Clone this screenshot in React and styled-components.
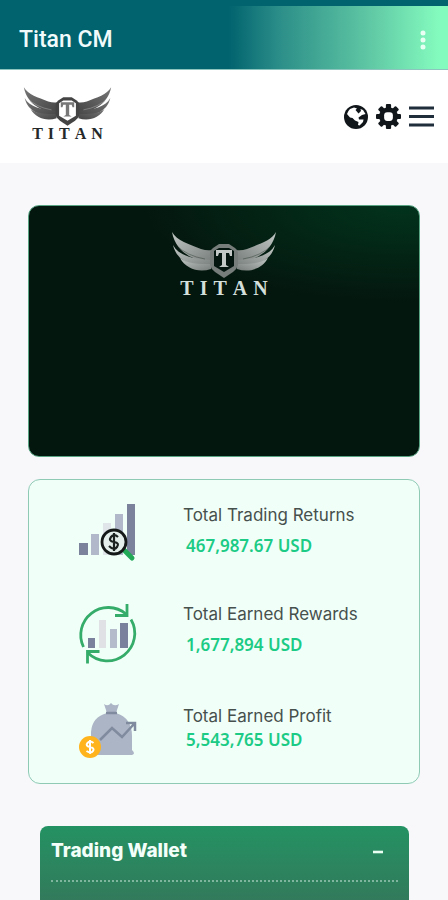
import React, { useState } from 'react';
import styled, { createGlobalStyle } from 'styled-components';

const GlobalStyle = createGlobalStyle`
  *, *::before, *::after { box-sizing: border-box; }
  html, body, #root { height: 100%; }
  body { margin: 0; background: #f8f8fb; font-family: Inter, "Liberation Sans", sans-serif; }
  h1, h2, dl, dt, dd { margin: 0; }
`;

const Page = styled.div`
  min-height: 100%;
  display: flex;
  flex-direction: column;
`;

const AppBar = styled.header`
  height: 70px;
  display: flex;
  align-items: center;
  justify-content: space-between;
  padding: 4px 16px 0 19px;
  border-top: 6px solid #00636e;
  border-bottom: 1px solid #8cc5bd;
  background: linear-gradient(90deg, #00636e 51%, #2b8d88 62%, #5cc3a2 81%, #84fbbe 98%);
`;

const AppTitle = styled.h1`
  color: #f2fbfb;
  font: 500 23px/28px Roboto, sans-serif;
`;

const IconButton = styled.button`
  display: flex;
  padding: 0;
  border: 0;
  background: none;
  color: ${(p) => p.$color || '#11161b'};
  cursor: pointer;
`;

const NavBar = styled.nav`
  height: 93px;
  display: flex;
  align-items: center;
  justify-content: space-between;
  padding: 0 14px 0 23px;
  background: #fff;
`;

const NavActions = styled.div`
  display: flex;
  align-items: center;
  gap: 8px;
`;

const Brand = styled.div`
  display: flex;
  flex-direction: column;
  align-items: center;
  padding-bottom: ${(p) => (p.$large ? 0 : 4)}px;
  color: ${(p) => (p.$large ? '#d3dfda' : '#25292a')};
`;

const Wordmark = styled.span`
  font: 700 ${(p) => (p.$large ? 20 : 16)}px/${(p) => (p.$large ? 20 : 16)}px "Liberation Serif", serif;
  display: flex;
  gap: ${(p) => (p.$large ? 6 : 5)}px;
`;

const Main = styled.main`
  flex: 1;
  display: flex;
  flex-direction: column;
  padding: 42px 28px 0;
`;

const Banner = styled.section`
  height: 252px;
  display: flex;
  justify-content: center;
  padding-top: 26px;
  border: 1px solid #58a483;
  border-radius: 11px;
  background: radial-gradient(ellipse 66% 38% at 96% 0, #02331c, #04170f);
`;

const Stats = styled.dl`
  margin-top: 22px;
  padding: 17px 46px 22px;
  display: flex;
  flex-direction: column;
  gap: 33px;
  border: 1px solid #8fcab5;
  border-radius: 12px;
  background: #f1fff9;
`;

const Stat = styled.div`
  display: grid;
  grid-template-columns: 64px 1fr;
  column-gap: 44px;
  align-items: center;
`;

const StatText = styled.div`
  display: flex;
  flex-direction: column;
  gap: ${(p) => (p.$tight ? 0 : 7)}px;
  white-space: nowrap;
`;

const StatLabel = styled.dt`
  color: #46504d;
  font-size: 17px;
  line-height: 24px;
`;

const StatValue = styled.dd`
  padding-left: 3px;
  color: #1ccb85;
  font: 600 17px/24px "Noto Sans", sans-serif;
`;

const Wallet = styled.section`
  flex: 1;
  min-height: 74px;
  margin: 42px 11px 0 12px;
  padding: 0 11px;
  border-radius: 8px 8px 0 0;
  background: linear-gradient(#249263, #327a5b 74px);
`;

const WalletHeader = styled.div`
  height: 56px;
  display: flex;
  align-items: center;
  justify-content: space-between;
  padding: 0 14px 4px 0;
  border-bottom: 2px dotted #7fb49e;
`;

const WalletTitle = styled.h2`
  color: #f3fff9;
  font-size: 19px;
  font-weight: 800;
  line-height: 24px;
`;

function WingMark({ id, width, height, shield, from, to }) {
  const fill = `url(#${id})`;
  const wing = (
    <g fill={fill}>
      <path d="M1 0C6 9 18 12 30 17Q36 19 41 18V31C25 29 5 22 1 0Z" />
      <path d="M2 13C8 24 22 27 41 28V35C22 35 6 30 2 13Z" />
      <path d="M9 26C17 32 27 32 40 32V37C28 41 15 37 9 26Z" />
      <path d="M5 13Q16 24 34 27" fill="none" stroke={shield} strokeWidth=".7" opacity=".45" />
    </g>
  );
  return (
    <svg width={width} height={height} viewBox="0 0 106 46" aria-hidden="true">
      <defs>
        <linearGradient id={id} x1="0" y1="0" x2="1" y2="1">
          <stop offset="0" stopColor={from} />
          <stop offset="1" stopColor={to} />
        </linearGradient>
      </defs>
      {wing}
      <g transform="translate(106 0) scale(-1 1)">{wing}</g>
      <path d="M48 12H58L64 16Q67 18 67 21V33Q66 37 62 40L53 46L44 40Q40 37 39 33V21Q39 18 42 16Z" fill={to} />
      <path d="M48 16H58L63 19V34L53 40L43 34V19Z" fill={shield} />
      <path d="M45 18H61V24H59L58 21H55V33L58 35H48L51 33V21H48L47 24H45Z" fill={from} />
    </svg>
  );
}

function Logo({ large }) {
  return (
    <Brand $large={large} role="img" aria-label="TITAN">
      {large ? (
        <WingMark id="wings-light" width={106} height={46} shield="#03150e" from="#c2c8c5" to="#777d7a" />
      ) : (
        <WingMark id="wings-dark" width={89} height={39} shield="#ffffff" from="#777777" to="#444444" />
      )}
      <Wordmark $large={large}>
        {[...'TITAN'].map((letter, i) => <span key={i}>{letter}</span>)}
      </Wordmark>
    </Brand>
  );
}

const DotsIcon = () => (
  <svg width="18" height="20" viewBox="0 0 18 20" fill="currentColor" aria-hidden="true">
    <circle cx="9" cy="3" r="2.5" /><circle cx="9" cy="10" r="2.5" /><circle cx="9" cy="17" r="2.5" />
  </svg>
);

const GlobeIcon = () => (
  <svg width="24" height="24" viewBox="0 0 24 24" aria-hidden="true">
    <circle cx="12" cy="12" r="12" fill="currentColor" />
    <path d="M6 4L10 2.5L13 3.5L11.5 5L14.5 8.5L17 6L16.5 4L19 5L21.5 9L18 10L14.5 12.5L15 14.5L19.5 14.5L19 17L15.5 20.5L14 20L14.5 17L11 15.5L8.5 13L6 12.5L3 9Q4 6 6 4Z" fill="#fff" />
  </svg>
);

const GearIcon = () => (
  <svg width="25" height="25" viewBox="-12 -12 24 24" aria-hidden="true">
    <g fill="currentColor">
      {[0, 45, 90, 135].map((angle) => (
        <rect key={angle} x="-2.5" y="-12" width="5" height="24" rx="1" transform={`rotate(${angle})`} />
      ))}
      <circle r="9" />
    </g>
    <rect x="-4.2" y="-4.2" width="8.4" height="8.4" rx="3" fill="#fff" />
  </svg>
);

const MenuIcon = () => (
  <svg width="25" height="24" viewBox="0 0 25 24" aria-hidden="true">
    <path d="M0 3H25M0 11.5H25M0 20H25" stroke="#202d3b" strokeWidth="3.2" />
  </svg>
);

const StatGraphic = styled.svg.attrs({ width: 64, height: 66, 'aria-hidden': true })`
  display: block;
  overflow: visible;
`;

const ReturnsIcon = () => (
  <StatGraphic viewBox="0 0 64 66">
    <path d="M4 46h9v12H4zM52 7h8v51h-8z" fill="#7b839c" />
    <path d="M16 37h8v21h-8zM40 17h8v41h-8z" fill="#b0b8ca" />
    <path d="M28 26h8v32h-8z" fill="#dfe5e8" />
    <path d="M49 53L57 61" stroke="#22a957" strokeWidth="5" strokeLinecap="round" />
    <circle cx="39" cy="45" r="12" fill="#e4efec" stroke="#151a19" strokeWidth="2.8" />
    <path d="M43 40Q39 36 36 40T39 45T42 50T34 49M39 36V54" fill="none" stroke="#1b211f" strokeWidth="2.2" />
  </StatGraphic>
);

const RewardsIcon = () => (
  <StatGraphic viewBox="0 0 64 66">
    <path d="M13 42h7v10h-7zM45 27h8v25h-8z" fill="#79819c" />
    <path d="M24 24h7v28h-7z" fill="#dfe1e4" />
    <path d="M35 33h7v19h-7z" fill="#b4bbca" />
    <g fill="none" stroke="#35ac69" strokeWidth="2.8">
      <path d="M8.5 51A27.5 27.5 0 0 1 51 18" />
      <path d="M40 19.5H52V8" />
      <path d="M56 23.5A27.5 27.5 0 0 1 13 57" />
      <path d="M12.5 67.5V55.5H24.5" />
    </g>
  </StatGraphic>
);

const ProfitIcon = () => (
  <StatGraphic viewBox="0 2 64 66">
    <path d="M29 11Q33 14 36 10Q39 14 44 11L41 20Q57 25 57 43V57Q61 61 57 62H16V39Q17 24 32 20Z" fill="#acb5c5" />
    <path d="M31 20H42" stroke="#808ba0" strokeWidth="2.5" />
    <path d="M25 47L37 35L47 44L59 31M51 30H60V38" fill="none" stroke="#818b9f" strokeWidth="2.5" />
    <circle cx="15" cy="54" r="11" fill="#ffb41d" />
    <path d="M18.5 50Q15 47 12.5 50T15 54T18 58T11.5 58M15 47V61" fill="none" stroke="#fff" strokeWidth="2" />
  </StatGraphic>
);

const MinusIcon = () => (
  <svg width="12" height="12" viewBox="0 0 12 12" aria-hidden="true">
    <path d="M1 7H11" stroke="currentColor" strokeWidth="2.6" />
  </svg>
);

const stats = [
  { label: 'Total Trading Returns', value: '467,987.67 USD', Icon: ReturnsIcon },
  { label: 'Total Earned Rewards', value: '1,677,894 USD', Icon: RewardsIcon },
  { label: 'Total Earned Profit', value: '5,543,765 USD', Icon: ProfitIcon, tight: true },
];

export default function App() {
  const [open, setOpen] = useState(true);
  return (
    <Page>
      <GlobalStyle />
      <AppBar>
        <AppTitle>Titan CM</AppTitle>
        <IconButton $color="#e9fff4" aria-label="More options"><DotsIcon /></IconButton>
      </AppBar>
      <NavBar>
        <Logo />
        <NavActions>
          <IconButton aria-label="Language"><GlobeIcon /></IconButton>
          <IconButton aria-label="Settings"><GearIcon /></IconButton>
          <IconButton aria-label="Menu"><MenuIcon /></IconButton>
        </NavActions>
      </NavBar>
      <Main>
        <Banner><Logo large /></Banner>
        <Stats>
          {stats.map(({ label, value, Icon, tight }) => (
            <Stat key={label}>
              <Icon />
              <StatText $tight={tight}>
                <StatLabel>{label}</StatLabel>
                <StatValue>{value}</StatValue>
              </StatText>
            </Stat>
          ))}
        </Stats>
        <Wallet>
          <WalletHeader>
            <WalletTitle>Trading Wallet</WalletTitle>
            <IconButton
              $color="#e9fff4"
              aria-label="Toggle trading wallet"
              aria-expanded={open}
              onClick={() => setOpen(!open)}
            >
              <MinusIcon />
            </IconButton>
          </WalletHeader>
        </Wallet>
      </Main>
    </Page>
  );
}
